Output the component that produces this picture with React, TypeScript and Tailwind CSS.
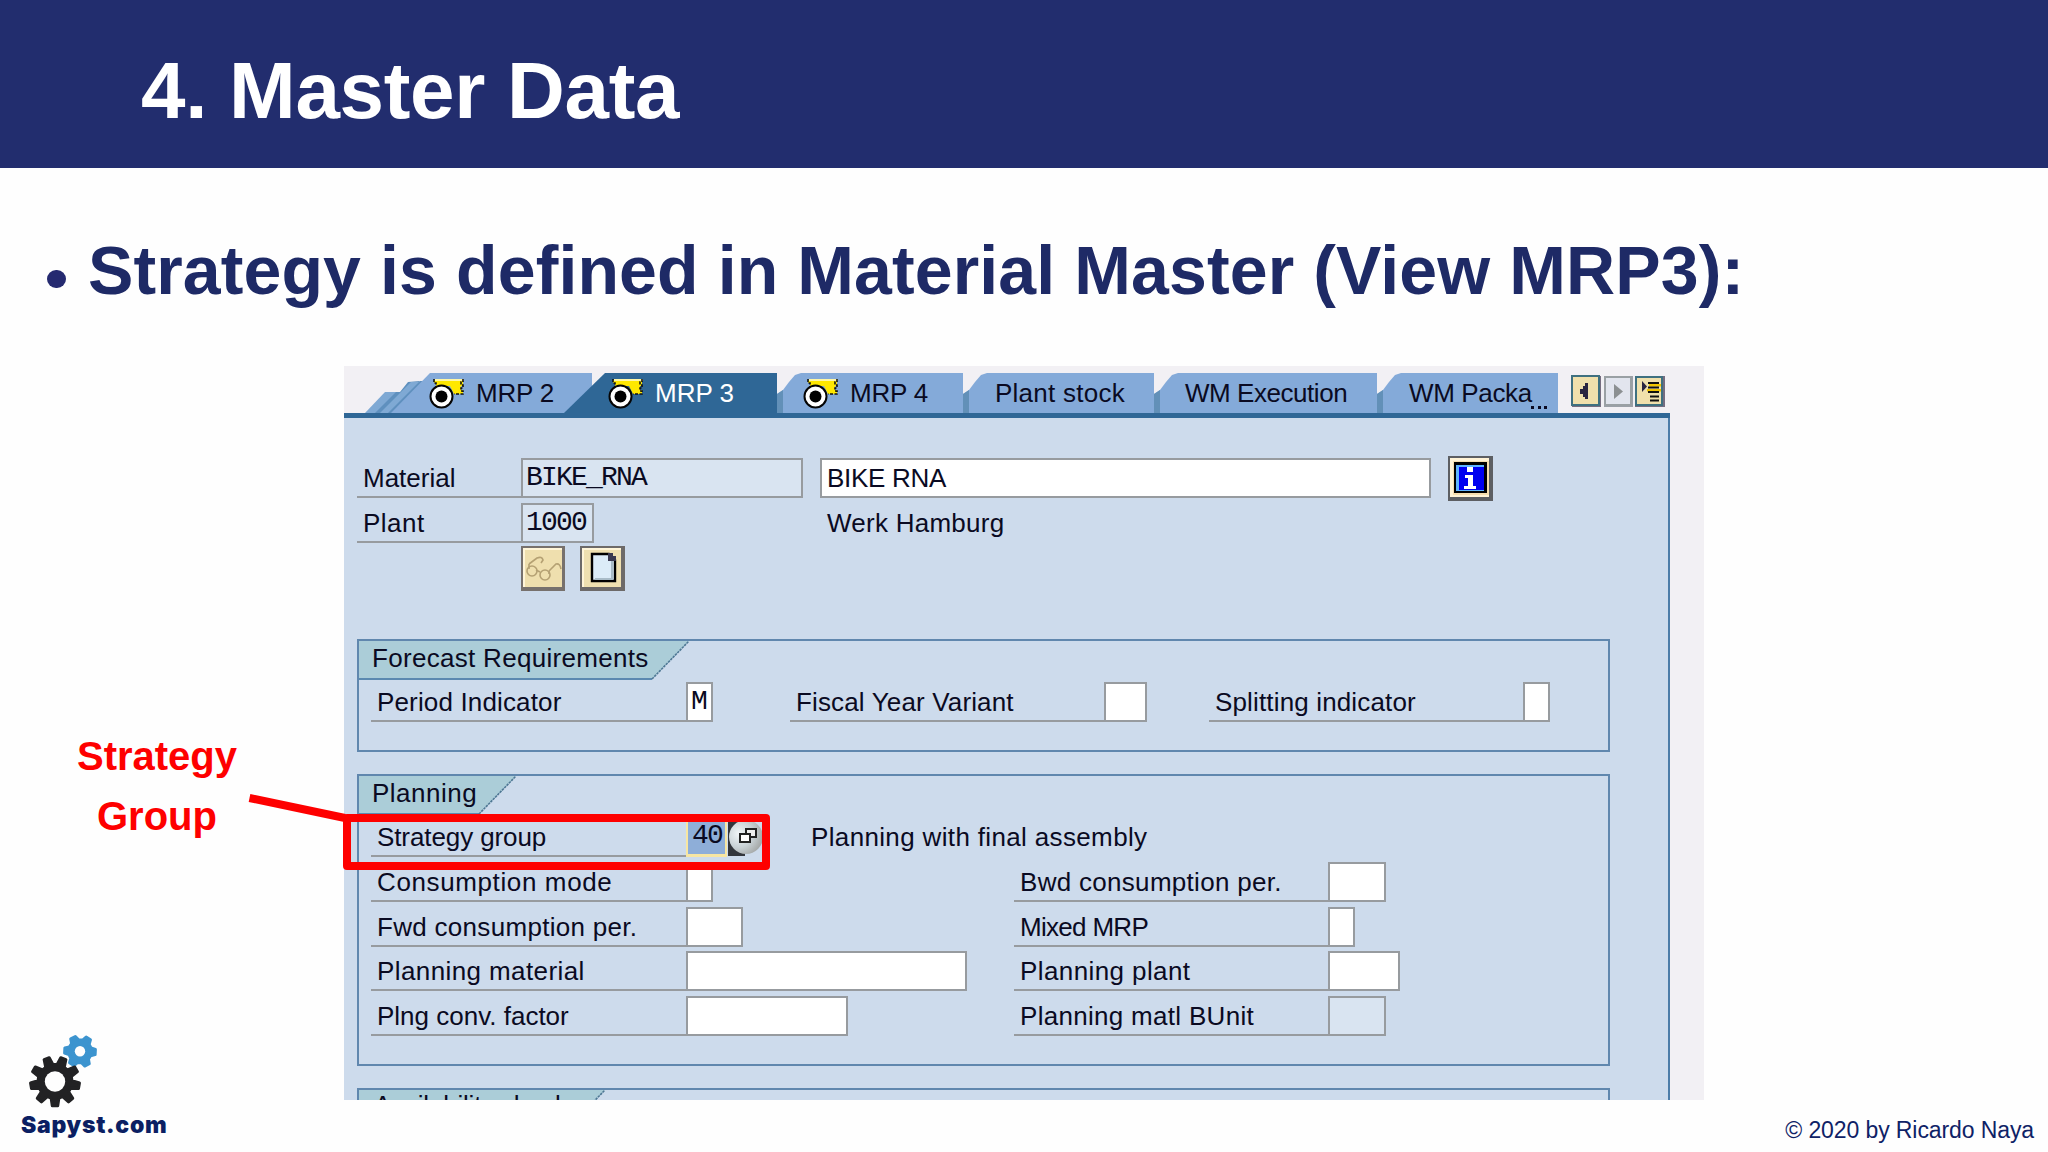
import React from 'react';

type FieldProps = {
    className: string;
    value?: string;
    readOnly?: boolean;
};

const Field = ({ className, value, readOnly }: FieldProps) => (
    <div
        className={`h-10 shrink-0 border-2 border-[#979b9f] pl-[3px] font-['Liberation_Mono',monospace] text-[28px] leading-[35px] tracking-[-1.8px] ${readOnly ? 'bg-[#d9e4f1]' : 'bg-white'} ${className}`}
    >
        {value}
    </div>
);

const Label = ({ text, className }: { text: string; className: string }) => (
    <div className={`h-10 shrink-0 whitespace-nowrap border-b-2 border-[#979b9f] pl-[6px] leading-[40px] ${className}`}>
        {text}
    </div>
);

const DisplayIcon = () => (
    <svg width="36" height="32" viewBox="0 0 36 32" className="shrink-0">
        <path d="M5 2h29v6h-2v4h2v4h-9l-4-8H7V5H5z" fill="#ffe800" />
        <path d="M6 2h29" stroke="#fff7a8" strokeWidth="2" />
        <path d="M5 1v4h2v4M34 1v3h-2v3h2v3h-2v3h2v3h-9" fill="none" stroke="#111" strokeWidth="1.6" strokeDasharray="3 1.5" />
        <circle cx="12.5" cy="18.5" r="11" fill="#fff" stroke="#050505" strokeWidth="2" />
        <circle cx="12.5" cy="18.5" r="6" fill="#000" />
    </svg>
);

const Tab = ({ text, className, icon }: { text: string; className: string; icon?: boolean }) => (
    <div
        className={`flex h-10 shrink-0 items-start border-l-[6px] border-[#6290b8] bg-[#84aad9] whitespace-nowrap leading-[40px] [clip-path:polygon(0_21px,6px_17px,12px_9px,18px_2px,24px_0,100%_0,100%_100%,0_100%)] ${className}`}
    >
        {icon && <div className="mr-[11px] mt-[5px]"><DisplayIcon /></div>}
        {text}
    </div>
);

const GroupHeader = ({ text, width, className }: { text: string; width: number; className: string }) => (
    <div className={`relative h-[36px] whitespace-nowrap ${className}`}>
        <svg width={width} height="39" className="absolute left-0 top-0">
            <path d={`M0 0H${width}L${width - 37} 38H0z`} fill="#abcdd8" />
            <path d={`M0 38H${width - 37}`} stroke="#5b89b0" strokeWidth="2" />
            <path d={`M${width - 37} 38L${width} 0`} stroke="#4f7894" strokeWidth="1.6" strokeDasharray="2.5 0.8" />
        </svg>
        <span className="relative">{text}</span>
    </div>
);

const gearPath = (cx: number, cy: number, outer: number, inner: number, teeth: number, start: number) => {
    const points: string[] = [];
    const step = (Math.PI * 2) / teeth;
    for (let i = 0; i < teeth; i++) {
        const a = start + i * step;
        [
            [inner, -0.33],
            [outer, -0.16],
            [outer, 0.16],
            [inner, 0.33],
        ].forEach(([r, o]) => {
            points.push(`${(cx + r * Math.cos(a + o * step)).toFixed(2)} ${(cy + r * Math.sin(a + o * step)).toFixed(2)}`);
        });
    }
    return `M${points.join('L')}Z`;
};

const Logo = () => (
    <div className="mt-[184px] pl-5">
        <svg width="90" height="80" viewBox="0 0 90 80">
            <path d={gearPath(60, 21.3, 15.5, 11.5, 6, 0.05)} fill="#3c94cf" stroke="#3c94cf" strokeWidth="3" strokeLinejoin="round" />
            <circle cx="60" cy="21.3" r="5.2" fill="#fefefe" />
            <path d={gearPath(35, 51.5, 24.5, 17, 9, Math.PI / 2)} fill="#222224" stroke="#222224" strokeWidth="3" strokeLinejoin="round" />
            <circle cx="35" cy="51.5" r="10.2" fill="#fefefe" />
        </svg>
        <div className="pl-px font-['Inter',sans-serif] text-[23px] font-black leading-[30px] tracking-[0.7px] text-[#0b1f63]">Sapyst.com</div>
    </div>
);

const SapWindow = () => (
    <div className="h-[734px] w-[1360px] overflow-hidden bg-[#f2f0f4] font-['Liberation_Sans',Arial,sans-serif] text-[26px] text-[#0a0a22]">
        <div className="flex h-[47px] items-end">
            <svg width="86" height="40" className="shrink-0">
                <path d="M21 40L41 19H56L36 40z" fill="#7fa9d4" />
                <path d="M31 40L52 19H56L64 9L76 8L47 40z" fill="#5f90be" />
                <path d="M36 40L67 9H76L45 40z" fill="#7fa9d4" />
                <path d="M44 40L76 8H86L54 40z" fill="#5f90be" />
            </svg>
            <div className="-ml-[39px] flex h-10 w-[201px] shrink-0 bg-[#84aad9] pl-[38px] leading-[40px] tracking-[-0.2px] [clip-path:polygon(0_100%,39px_0,100%_0,100%_100%)]">
                <div className="mr-[11px] mt-[5px]"><DisplayIcon /></div>
                MRP 2
            </div>
            <div className="relative -ml-[28px] flex h-10 w-[213px] shrink-0 bg-[#2f6796] pl-[44px] leading-[40px] text-white [clip-path:polygon(0_100%,41px_0,100%_0,100%_100%)]">
                <div className="mr-[11px] mt-[5px]"><DisplayIcon /></div>
                MRP 3
            </div>
            <Tab text="MRP 4" className="w-[186px] pl-5 tracking-[-0.2px]" icon />
            <Tab text="Plant stock" className="w-[191px] pl-[26px] tracking-[0.25px]" />
            <Tab text="WM Execution" className="w-[223px] pl-[25px] tracking-[-0.45px]" />
            <div className="flex">
                <Tab text="WM Packa" className="w-[181px] pl-[26px] tracking-[-0.35px]" />
                <div className="relative -ml-[28px] w-[28px] pt-[33px]">
                    <svg width="18" height="3" className="block">
                        <path d="M1 0h3v3H1zM8 0h3v3H8zM14 0h3v3h-3z" fill="#0a0a22" />
                    </svg>
                </div>
            </div>
            <svg width="94" height="34" className="mb-1 ml-[13px] shrink-0">
                <path d="M1 1h29v31H1z" fill="#756d80" />
                <path d="M1 1h27v29H1z" fill="#f0e0ac" stroke="#3f7080" strokeWidth="2" />
                <path d="M17 8v16h-3v-2h-2v-3H9v-5h3v-3h2V8z" fill="#2a2540" />
                <path d="M33 1h29v31H33z" fill="#9ba0a8" />
                <path d="M34 2h26v28H34z" fill="#e2e5ee" stroke="#9aa0a4" strokeWidth="2" />
                <path d="M43 9l9 7.500l-9 7.500z" fill="#8c9092" />
                <path d="M64 1h30v31H64z" fill="#756d80" />
                <path d="M65 2h26v28H65z" fill="#f0e0ac" stroke="#3f7080" strokeWidth="2" />
                <path d="M78 9h12v2.500H78zM76 14h14v2.500H76z" fill="#f2c500" />
                <path d="M71 6v11l5-5.500z" fill="#2a2540" />
                <path d="M77 8h11M77 12.500h11M77 17h11M79 21.500h9M79 25.500h9" stroke="#111" strokeWidth="2" />
            </svg>
        </div>
        <div className="h-[5px] w-[1326px] bg-[#2f6796]" />
        <div className="h-[700px] w-[1326px] border-r-2 border-[#4c7ca8] bg-[#cddbec] pl-[13px] pt-10">
            <div className="flex">
                <Label text="Material" className="w-[164px]" />
                <Field className="w-[282px]" value="BIKE_RNA" readOnly />
                <div className="ml-[17px] h-10 w-[611px] border-2 border-[#979b9f] bg-white pl-[5px] leading-[37px] tracking-[-0.3px]">
                    BIKE RNA
                </div>
                <svg width="45" height="45" className="-mt-[2px] ml-[17px] block">
                    <path d="M0 0h45v45H0z" fill="#5d5f63" />
                    <path d="M2 2h39v39H2z" fill="#fff3d6" />
                    <path d="M5 5h36v34H5z" fill="#f6deae" />
                    <path d="M6 6h33v31H6z" fill="#000" />
                    <path d="M8 9h28v26H8z" fill="#5fb4ff" />
                    <path d="M11 11h25v23H11z" fill="#0000f0" />
                    <path d="M19 11h6v5h-6zM17 19h8v11h3v3H16v-3h4v-8h-3z" fill="#fff" />
                </svg>
            </div>
            <div className="flex h-[45px] pt-[2px]">
                <Label text="Plant" className="w-[164px] tracking-[0.5px]" />
                <Field className="w-[73px]" value="1000" readOnly />
                <div className="ml-[233px] leading-[41px] tracking-[0.25px]">Werk Hamburg</div>
            </div>
            <div className="flex gap-[15px] pl-[164px]">
                <svg width="44" height="45">
                    <path d="M0 0h44v45H0z" fill="#77716d" />
                    <path d="M2 2h39v39H2z" fill="#fff5d8" />
                    <path d="M4 4h37v37H4z" fill="#efdfae" />
                    <path d="M8 18l8-6q5-2 6 2l-2 3M28 25l7-7q4-1 5 5" fill="none" stroke="#b5a173" strokeWidth="1.600" />
                    <circle cx="11" cy="25" r="5" fill="none" stroke="#b5a173" strokeWidth="1.600" />
                    <circle cx="24" cy="29" r="5" fill="none" stroke="#b5a173" strokeWidth="1.600" />
                    <path d="M15 24l4 2M8 18v5M28 25v3" stroke="#b5a173" strokeWidth="1.600" />
                </svg>
                <svg width="45" height="45">
                    <path d="M0 0h45v45H0z" fill="#6d6a69" />
                    <path d="M2 2h39v39H2z" fill="#fff5d8" />
                    <path d="M4 4h37v37H4z" fill="#efe0b0" />
                    <path d="M12 8h17l6 6v21H12z" fill="#dcecf8" stroke="#000" strokeWidth="2.400" />
                    <path d="M32 15v18H15" fill="none" stroke="#a9bcc8" strokeWidth="2" />
                    <path d="M28 7h5v3h3v5h-8z" fill="#3a3950" />
                </svg>
            </div>

            <div className="mt-[48px] h-[113px] w-[1253px] border-2 border-[#6087ae]">
                <GroupHeader text="Forecast Requirements" width={330} className="pl-[13px] leading-[35px] tracking-[0.3px]" />
                <div className="flex h-[45px] items-end pl-3">
                    <Label text="Period Indicator" className="w-[315px] tracking-[0.15px]" />
                    <Field className="w-[27px]" value="M" />
                    <Label text="Fiscal Year Variant" className="ml-[77px] w-[314px] tracking-[0.15px]" />
                    <Field className="w-[43px]" />
                    <Label text="Splitting indicator" className="ml-[62px] w-[314px] tracking-[0.15px]" />
                    <Field className="w-[27px]" />
                </div>
            </div>

            <div className="mt-[22px] h-[292px] w-[1253px] border-2 border-[#6087ae]">
                <GroupHeader text="Planning" width={157} className="pl-[13px] leading-[35px] tracking-[0.5px]" />
                <div className="flex h-[45px] items-end pl-3">
                    <Label text="Strategy group" className="w-[315px] tracking-[-0.1px]" />
                    <div className="h-10 w-[41px] border-2 border-b-[3px] border-[#f7e6a2] bg-[#8eaed8] pl-[4px] font-['Liberation_Mono',monospace] text-[28px] leading-[34px] tracking-[-1.8px]">40</div>
                    <svg width="36" height="40">
                        <defs>
                            <radialGradient id="help" cx="0.3" cy="0.4" r="0.8">
                                <stop offset="0" stopColor="#f2f6f8" />
                                <stop offset="0.5" stopColor="#c9d2d6" />
                                <stop offset="1" stopColor="#9a9c9a" />
                            </radialGradient>
                        </defs>
                        <path d="M1 0h17v39H1z" fill="#33363c" />
                        <circle cx="19" cy="20" r="17" fill="url(#help)" />
                        <path d="M19 12h10v8H19z" fill="#eee" stroke="#222" strokeWidth="2" />
                        <path d="M13 17h10v8H13z" fill="#fff" stroke="#222" strokeWidth="2" />
                    </svg>
                    <div className="h-10 pl-[48px] leading-[40px] tracking-[0.35px]">Planning with final assembly</div>
                </div>
                <div className="flex pl-3">
                    <div className="flex w-[643px] flex-col gap-[4.800px] pt-[4.800px]">
                        <div className="flex">
                            <Label text="Consumption mode" className="w-[315px] tracking-[0.62px]" />
                            <Field className="w-[27px]" />
                        </div>
                        <div className="flex">
                            <Label text="Fwd consumption per." className="w-[315px] tracking-[0.3px]" />
                            <Field className="w-[57px]" />
                        </div>
                        <div className="flex">
                            <Label text="Planning material" className="w-[315px] tracking-[0.4px]" />
                            <Field className="w-[281px]" />
                        </div>
                        <div className="flex">
                            <Label text="Plng conv. factor" className="w-[315px]" />
                            <Field className="w-[162px]" />
                        </div>
                    </div>
                    <div className="flex flex-col gap-[4.800px] pt-[4.800px]">
                        <div className="flex">
                            <Label text="Bwd consumption per." className="w-[314px] tracking-[0.3px]" />
                            <Field className="w-[58px]" />
                        </div>
                        <div className="flex">
                            <Label text="Mixed MRP" className="w-[314px] tracking-[-0.7px]" />
                            <Field className="w-[27px]" />
                        </div>
                        <div className="flex">
                            <Label text="Planning plant" className="w-[314px] tracking-[0.4px]" />
                            <Field className="w-[72px]" />
                        </div>
                        <div className="flex">
                            <Label text="Planning matl BUnit" className="w-[314px] tracking-[0.3px]" />
                            <Field className="w-[58px]" readOnly />
                        </div>
                    </div>
                </div>
            </div>

            <div className="mt-[22px] h-[113px] w-[1253px] border-2 border-[#6087ae]">
                <GroupHeader text="Availability check" width={246} className="pl-[15px] leading-[31px] tracking-[-0.2px]" />
            </div>
        </div>
    </div>
);

const App = () => (
    <div className="relative flex h-[1152px] w-[2048px] flex-col overflow-hidden bg-[#fefefe] font-['Liberation_Sans',Arial,sans-serif]">
        <header className="h-[168px] bg-[#222d6e] pl-[141px] pt-[46px]">
            <h1 className="text-[80px] font-bold leading-[90px] tracking-[-0.3px] text-white">4. Master Data</h1>
        </header>
        <div className="flex h-[198px] pl-[47px] pt-[63px]">
            <div className="mt-[39px] h-[18px] w-[19px] rounded-full bg-[#252a70]" />
            <h2 className="ml-[22px] whitespace-nowrap text-[68px] font-bold leading-[78px] tracking-[0.12px] text-[#1e2a66]">
                Strategy is defined in Material Master (View MRP3):
            </h2>
        </div>
        <div className="flex flex-1">
            <aside className="w-[344px] shrink-0 pt-[360px]">
                <div className="w-[314px] text-center text-[40px] font-bold leading-[60px] text-[#fe0000]">
                    Strategy
                    <br />
                    Group
                </div>
                <Logo />
            </aside>
            <main>
                <SapWindow />
                <footer className="w-[1690px] pt-[15px] text-right text-[23px] leading-[30px] tracking-[-0.1px] text-[#0f2266]">
                    © 2020 by Ricardo Naya
                </footer>
            </main>
        </div>

        {/* callout over the strategy group row */}
        <svg width="540" height="90" className="absolute left-[240px] top-[790px]">
            <path d="M9.500 8L105 28" stroke="#fe0000" strokeWidth="8" />
            <rect x="107" y="28" width="419" height="48" fill="none" stroke="#fe0000" strokeWidth="8" strokeLinejoin="round" />
        </svg>
    </div>
);

export default App;
